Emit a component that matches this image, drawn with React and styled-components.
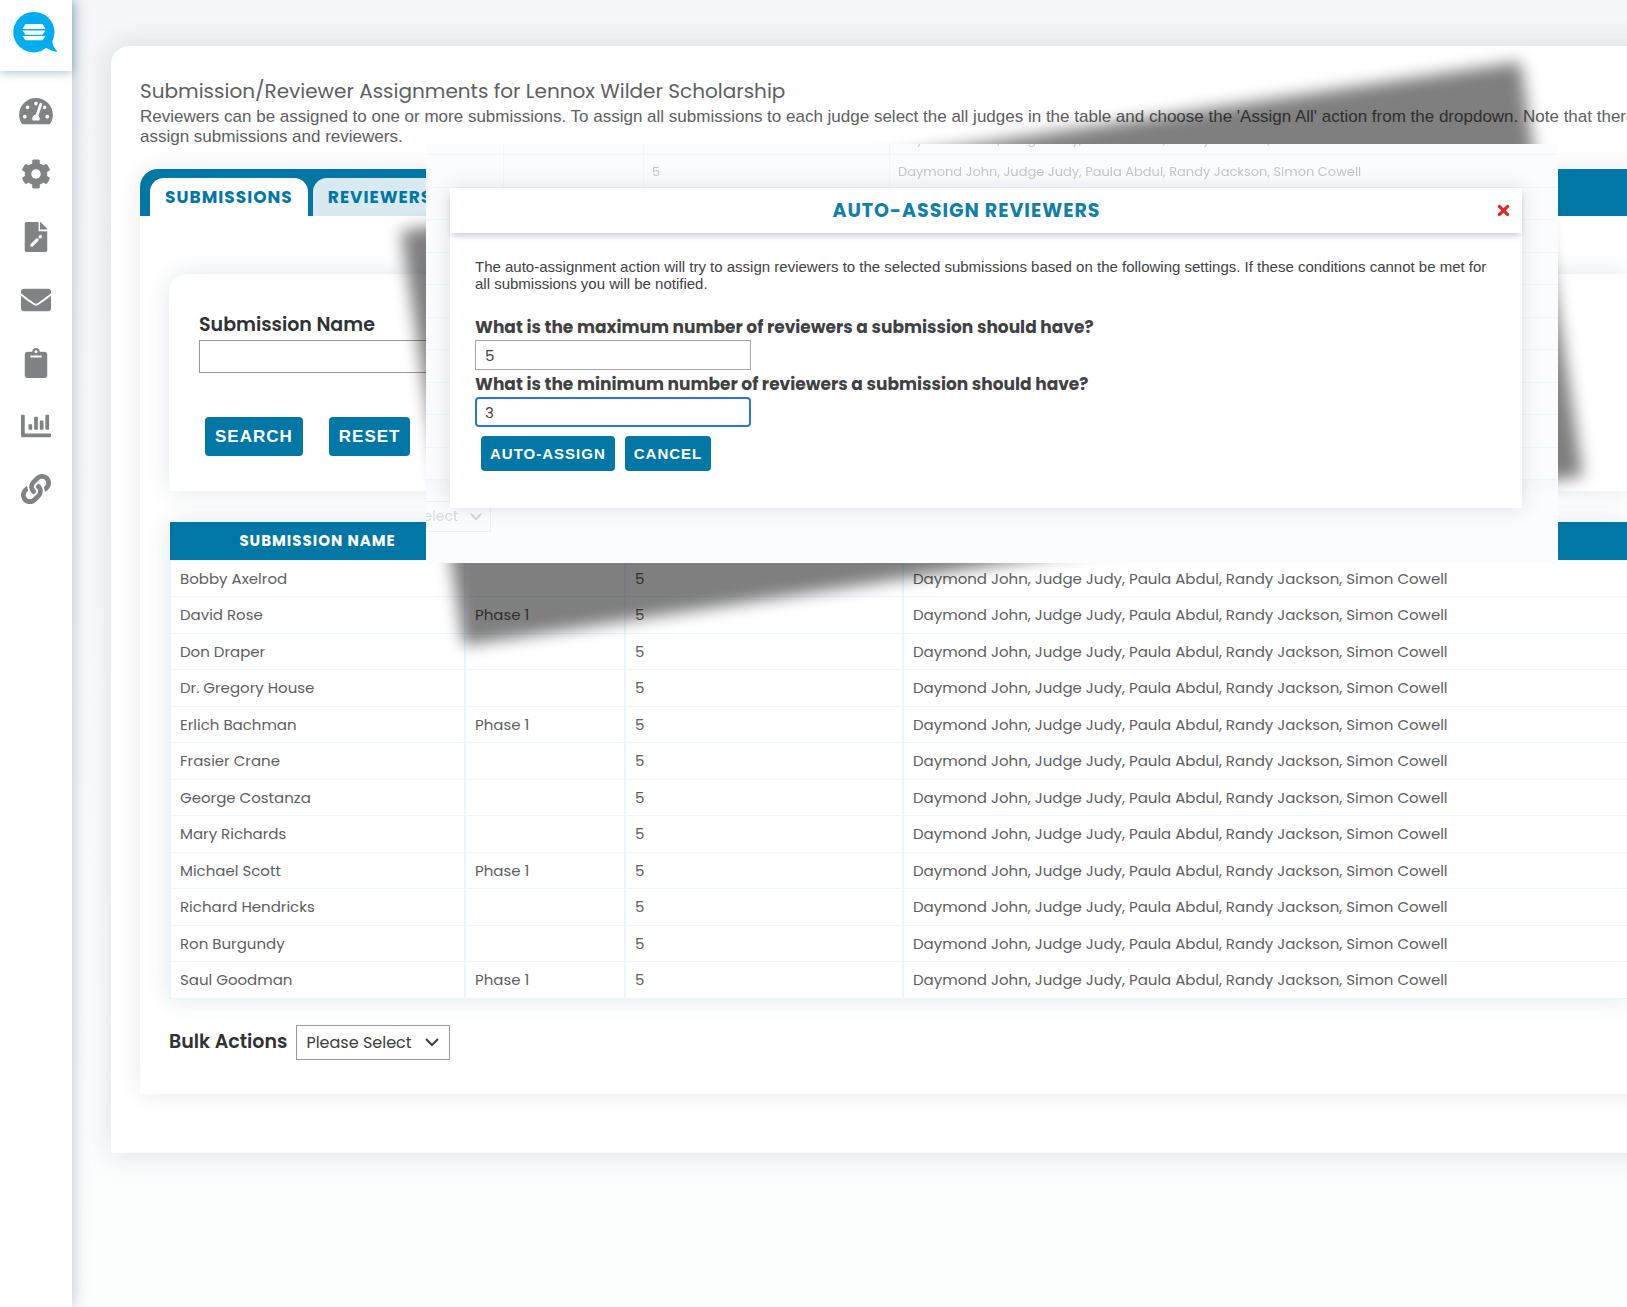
import React from 'react';
import styled, { createGlobalStyle, css } from 'styled-components';
import {
  FaTachometerAlt,
  FaCog,
  FaEnvelope,
  FaClipboard,
  FaChartBar,
  FaLink,
  FaTimes,
} from 'react-icons/fa';

const heading = "Poppins, Inter, 'Liberation Sans', sans-serif";
const body = "'Liberation Sans', Arial, sans-serif";
const blue = '#0077a4';

const GlobalStyle = createGlobalStyle`
  * {
    box-sizing: border-box;
  }
  body {
    margin: 0;
    overflow-x: hidden;
    font-family: ${heading};
    color: #5c5e60;
    background: #fbfcfc;
  }
`;

const Page = styled.div`
  position: relative;
  display: flex;
  min-height: 100vh;
  overflow: hidden;
  background: linear-gradient(#f4f6f8, #fafbfc 60%, #fcfdfd);
`;

const Sidebar = styled.nav`
  flex: none;
  width: 72px;
  background: #fff;
  box-shadow: 0 0 16px rgba(0, 66, 90, .3);
`;

const LogoLink = styled.a`
  display: block;
  height: 71px;
  padding: 12px 13px;
  box-shadow: 0 1px 10px rgba(0, 66, 90, .35);
`;

const NavList = styled.ul`
  display: flex;
  flex-direction: column;
  align-items: center;
  gap: 33px;
  margin: 0;
  padding: 25px 0;
  list-style: none;
`;

const NavLink = styled.a`
  display: flex;
  color: #808284;

  svg {
    width: 34px;
    height: 30px;
  }
`;

const Main = styled.main`
  flex: 1;
  min-width: 0;
  padding: 46px 0 60px 39px;
`;

const Card = styled.section`
  margin-right: -60px;
  padding: 32px 29px 59px;
  border-radius: 18px 0 0 0;
  background: #fff;
  box-shadow: 0 0 28px rgba(0, 66, 90, .14);
`;

const Title = styled.h1`
  margin: 0;
  font-size: 20px;
  line-height: 26px;
  font-weight: 400;
`;

const Description = styled.p`
  margin: 3px 0 22px;
  font-family: ${body};
  font-size: 17px;
  line-height: 20px;
  white-space: nowrap;
`;

const Tabs = styled.div`
  display: flex;
  gap: 5px;
  height: 47px;
  padding: 9px 10px 0;
  border-radius: 18px 0 0 0;
  background: ${blue};
`;

const Tab = styled.button`
  padding: 0 15px;
  border: 0;
  border-radius: 14px 14px 0 0;
  background: ${props => (props.$active ? '#fff' : '#d9e9f0')};
  font-family: ${heading};
  font-size: 17px;
  font-weight: 700;
  letter-spacing: 1px;
  color: ${blue};
`;

const Panel = styled.div`
  border-radius: 18px 0 0 0;
  box-shadow: 0 0 24px rgba(0, 0, 0, .09);
`;

const PanelBody = styled.div`
  padding: 58px 29px 34px;
`;

const SearchCard = styled.form`
  padding: 38px 30px 35px;
  border-radius: 18px 0 0 0;
  box-shadow: 0 0 24px rgba(0, 66, 90, .12);
`;

const Label = styled.label`
  display: block;
  font-size: ${props => (props.$small ? '17px' : '19px')};
  line-height: 26px;
  font-weight: ${props => (props.$small ? 700 : 600)};
  color: ${props => (props.$small ? '#3f4143' : '#2f3133')};
`;

const TextInput = styled.input`
  display: block;
  width: 480px;
  height: 33px;
  margin-top: 2px;
  border: 1px solid #97999b;
  background: #fff;
`;

const ButtonRow = styled.div`
  display: flex;
  gap: ${props => (props.$tight ? '10px' : '26px')};
  padding: ${props => (props.$tight ? '8px 6px' : '44px 6px 0')};
`;

const Button = styled.button`
  height: 39px;
  padding: 0 10px;
  border: 0;
  border-radius: 4px;
  background: ${blue};
  font-family: ${body};
  font-size: 17px;
  font-weight: 700;
  letter-spacing: 1px;
  color: #fff;

  ${props => props.$small && css`
    height: 35px;
    padding: 0 9px;
    font-size: 15px;
  `}
`;

const Table = styled.table`
  width: 100%;
  margin: 31px 0 26px;
  border-collapse: collapse;
  table-layout: fixed;
  box-shadow: 0 0 24px rgba(0, 66, 90, .12);
  font-size: 15px;

  th {
    height: 38px;
    padding: 0;
    background: ${blue};
    font-size: 15px;
    font-weight: 700;
    letter-spacing: 1px;
    color: #fff;
  }
  td {
    height: 36px;
    padding: 0 9px;
    border: solid #e8f7fd;
    border-width: 1px 2px;
    white-space: nowrap;
  }
  tr:nth-child(even) td {
    height: 37px;
  }
`;

const Bulk = styled.div`
  display: flex;
  align-items: center;
  gap: 9px;
  height: 35px;
`;

const SelectBox = styled.span`
  display: flex;
  align-items: center;
  border: 1px solid #97999b;
  background: #fff;

  select {
    flex: none;
    width: 152px;
    height: 33px;
    padding: 0 9px;
    border: 0;
    appearance: none;
    background: transparent;
    font-family: ${heading};
    font-size: 16px;
    color: #3c3e40;
  }
  svg {
    flex: none;
    width: 14px;
    margin: 0 10px 0 -24px;
    pointer-events: none;
  }
`;

const Overlay = styled.div`
  position: absolute;
  top: 144px;
  left: 426px;
  right: 69px;
  z-index: 1;

  &::before {
    content: '';
    position: absolute;
    inset: 0;
    background: rgba(0, 0, 0, .5);
    filter: blur(8px);
    transform: rotate(-8.6deg);
  }
`;

const Backdrop = styled.div`
  position: relative;
  overflow: hidden;
  padding: 44px 36px 55px 24px;
  background: #fbfcfe;
`;

const Faded = styled.div`
  position: absolute;
  top: -22px;
  left: -160px;
  right: -60px;
`;

const FadedTable = styled.table`
  width: 100%;
  border-collapse: collapse;
  table-layout: fixed;
  font-size: 13px;
  opacity: .35;
  box-shadow: 0 0 24px rgba(0, 66, 90, .12);

  td {
    height: 32px;
    padding: 2px 8px 0;
    border: 1px solid #d8f1fa;
    white-space: nowrap;
  }
  tr:nth-child(even) td {
    height: 33px;
  }
`;

const FadedSelect = styled.div`
  display: flex;
  justify-content: flex-end;
  align-items: center;
  gap: 12px;
  width: 140px;
  height: 31px;
  margin: 21px 0 0 85px;
  padding-right: 8px;
  border: 1px solid #c4c6c8;
  font-size: 14px;
  white-space: nowrap;
  opacity: .22;

  svg {
    flex: none;
    width: 12px;
  }
`;

const Modal = styled.div`
  position: relative;
  min-height: 320px;
  background: #fff;
  box-shadow: 0 0 20px rgba(0, 66, 90, .14);
`;

const ModalHeader = styled.header`
  display: flex;
  align-items: center;
  height: 45px;
  padding: 0 10px;
  box-shadow: 0 5px 6px -2px rgba(0, 50, 70, .22);
`;

const ModalTitle = styled.h2`
  flex: 1;
  margin: 0;
  padding-right: 22px;
  font-size: 19px;
  font-weight: 700;
  letter-spacing: 1px;
  text-align: center;
  color: #1080ab;
`;

const CloseButton = styled.button`
  display: flex;
  padding: 0;
  border: 0;
  background: none;
  font-size: 17px;
  color: #e32526;
`;

const ModalBody = styled.div`
  padding: 25px;
  color: #3f4143;
`;

const ModalText = styled.p`
  margin: 0 0 22px;
  font-family: ${body};
  font-size: 15px;
  line-height: 17px;
`;

const ModalInput = styled.input`
  display: block;
  width: 276px;
  height: 30px;
  margin-bottom: 1px;
  padding: 0 9px;
  border: 1px solid #a3a5a7;
  background: #fff;
  font-family: ${heading};
  font-size: 15px;
  color: #3f4143;

  ${props => props.$focused && css`
    padding: 0 8px;
    border: 2px solid #2b74d9;
    border-radius: 4px;
  `}
`;

const judges = 'Daymond John, Judge Judy, Paula Abdul, Randy Jackson, Simon Cowell';

const submissions = [
  ['Bobby Axelrod', ''],
  ['David Rose', 'Phase 1'],
  ['Don Draper', ''],
  ['Dr. Gregory House', ''],
  ['Erlich Bachman', 'Phase 1'],
  ['Frasier Crane', ''],
  ['George Costanza', ''],
  ['Mary Richards', ''],
  ['Michael Scott', 'Phase 1'],
  ['Richard Hendricks', ''],
  ['Ron Burgundy', ''],
  ['Saul Goodman', 'Phase 1'],
];

function Logo() {
  return (
    <svg width="45" height="41" viewBox="0 0 45 41">
      <path d="M20.500 0a20.200 20.200 0 1 0 12.500 36q6 3.500 11.500 4-5-6-5.200-10.800A20.200 20.200 0 0 0 20.500 0z" fill="#00aeef" />
      <path d="M12.500 12h17l3 5h-23zM9.500 18.500h23l-3 4.300h-17zM9.500 24h23l-3 4.300h-17z" fill="#fff" />
    </svg>
  );
}

function FileEdit() {
  return (
    <svg viewBox="0 0 384 512" fill="currentColor">
      <path d="M236 144V0H24C10.700 0 0 10.700 0 24v464c0 13.300 10.700 24 24 24h336c13.300 0 24-10.700 24-24V156H248c-8 0-12-4-12-12zM384 118v10H260V0l6 1 112 107c4 4 6 6 6 10z" />
      <path d="M128 388L212 304M262 254l6-6" stroke="#fff" strokeWidth="54" strokeLinecap="round" />
      <path d="M94 422l10-50 40 40z" fill="#fff" />
    </svg>
  );
}

function Chevron() {
  return (
    <svg viewBox="0 0 14 9" fill="none" stroke="#3c3e40" strokeWidth="2">
      <path d="M1 1l6 6 6-6" />
    </svg>
  );
}

const navItems = [
  ['Dashboard', FaTachometerAlt],
  ['Settings', FaCog],
  ['Forms', FileEdit],
  ['Messages', FaEnvelope],
  ['Submissions', FaClipboard],
  ['Reports', FaChartBar],
  ['Links', FaLink],
];

function SubmissionsTable() {
  return (
    <Table>
      <colgroup>
        <col width="295" />
        <col width="160" />
        <col width="278" />
        <col />
      </colgroup>
      <thead>
        <tr>
          <th>SUBMISSION NAME</th>
          <th />
          <th />
          <th />
        </tr>
      </thead>
      <tbody>
        {submissions.map(([name, phase]) => (
          <tr key={name}>
            <td>{name}</td>
            <td>{phase}</td>
            <td>5</td>
            <td>{judges}</td>
          </tr>
        ))}
      </tbody>
    </Table>
  );
}

// only the first two rows show above the dialog, the rest are just grid lines
function FadedPage() {
  return (
    <Faded aria-hidden="true">
      <FadedTable>
        <colgroup>
          <col width="237" />
          <col width="140" />
          <col width="246" />
          <col />
        </colgroup>
        <tbody>
          {submissions.slice(0, 11).map(([name], i) => (
            <tr key={name}>
              <td />
              <td />
              <td>{i === 1 && '5'}</td>
              <td>{i < 2 && judges}</td>
            </tr>
          ))}
        </tbody>
      </FadedTable>
      <FadedSelect>Please Select <Chevron /></FadedSelect>
    </Faded>
  );
}

function AutoAssignModal() {
  return (
    <Overlay>
      <Backdrop>
        <FadedPage />
        <Modal role="dialog" aria-labelledby="modal-title">
          <ModalHeader>
            <ModalTitle id="modal-title">AUTO-ASSIGN REVIEWERS</ModalTitle>
            <CloseButton aria-label="Close"><FaTimes /></CloseButton>
          </ModalHeader>
          <ModalBody>
            <ModalText>
              The auto-assignment action will try to assign reviewers to the selected submissions based on the following settings. If these conditions cannot be met for all submissions you will be notified.
            </ModalText>
            <Label $small htmlFor="max">What is the maximum number of reviewers a submission should have?</Label>
            <ModalInput id="max" defaultValue="5" />
            <Label $small htmlFor="min">What is the minimum number of reviewers a submission should have?</Label>
            <ModalInput id="min" defaultValue="3" $focused />
            <ButtonRow $tight>
              <Button $small>AUTO-ASSIGN</Button>
              <Button $small>CANCEL</Button>
            </ButtonRow>
          </ModalBody>
        </Modal>
      </Backdrop>
    </Overlay>
  );
}

export default function App() {
  return (
    <Page>
      <GlobalStyle />
      <Sidebar>
        <LogoLink href="#" aria-label="Home"><Logo /></LogoLink>
        <NavList>
          {navItems.map(([name, Icon]) => (
            <li key={name}>
              <NavLink href="#" aria-label={name}><Icon /></NavLink>
            </li>
          ))}
        </NavList>
      </Sidebar>
      <Main>
        <Card>
          <Title>Submission/Reviewer Assignments for Lennox Wilder Scholarship</Title>
          <Description>
            Reviewers can be assigned to one or more submissions. To assign all submissions to each judge select the all judges in the table and choose the 'Assign All' action from the dropdown. Note that there
            <br />
            assign submissions and reviewers.
          </Description>
          <Panel>
            <Tabs>
              <Tab $active>SUBMISSIONS</Tab>
              <Tab>REVIEWERS</Tab>
            </Tabs>
            <PanelBody>
              <SearchCard>
                <Label htmlFor="name">Submission Name</Label>
                <TextInput id="name" />
                <ButtonRow>
                  <Button type="button">SEARCH</Button>
                  <Button type="reset">RESET</Button>
                </ButtonRow>
              </SearchCard>
              <SubmissionsTable />
              <Bulk>
                <Label htmlFor="bulk">Bulk Actions</Label>
                <SelectBox>
                  <select id="bulk">
                    <option>Please Select</option>
                  </select>
                  <Chevron />
                </SelectBox>
              </Bulk>
            </PanelBody>
          </Panel>
        </Card>
      </Main>
      <AutoAssignModal />
    </Page>
  );
}
